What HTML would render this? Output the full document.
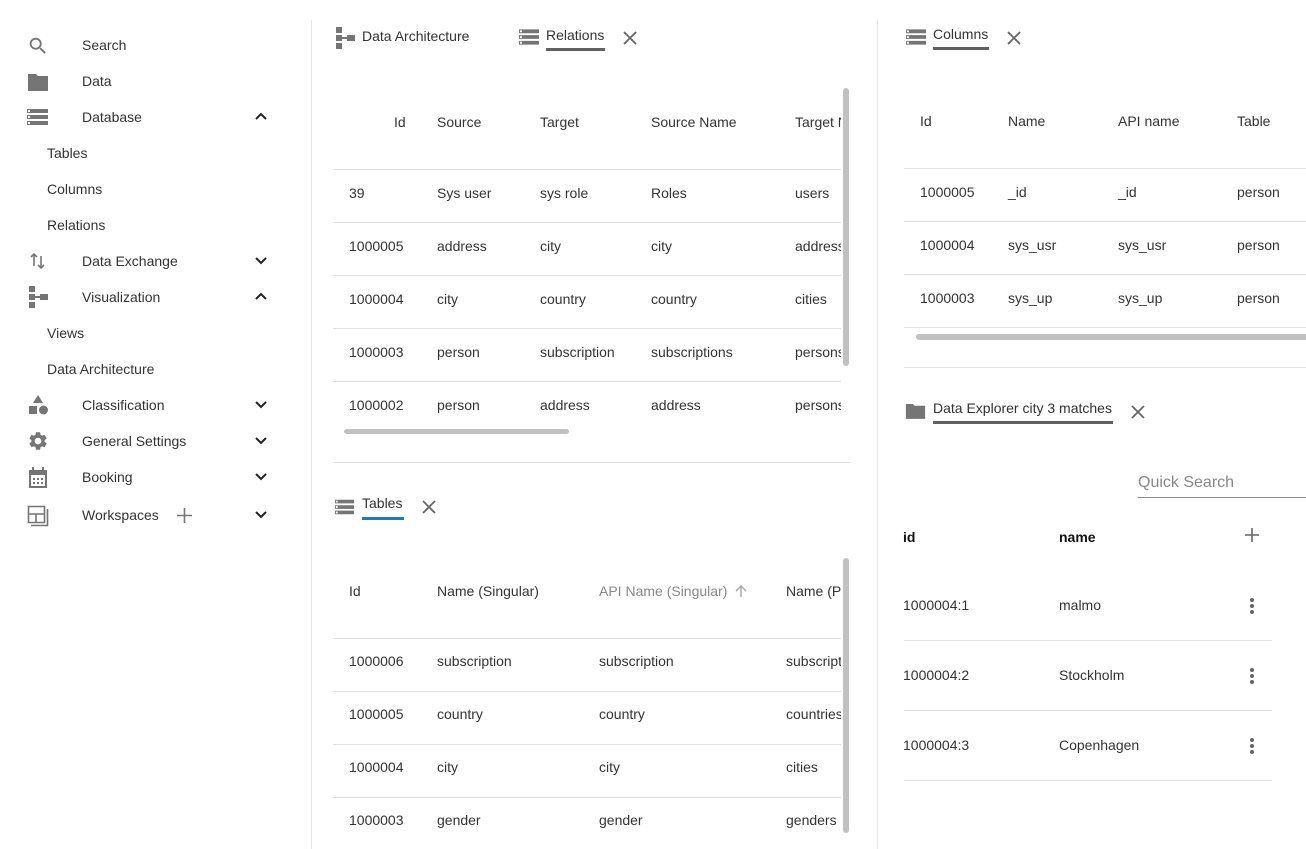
<!DOCTYPE html>
<html><head><meta charset="utf-8"><style>
*{margin:0;padding:0;box-sizing:border-box}
body{width:1306px;height:849px;overflow:hidden;background:#fff;font-family:"Liberation Sans",Arial,sans-serif;font-size:14px;color:#333;position:relative}
.t{position:absolute;line-height:16px;white-space:nowrap}
.l{position:absolute;height:1px;background:#e0e0e0}
.ic{position:absolute}
.clip{position:absolute;overflow:hidden}
.g{color:#888}
</style></head><body>
<!-- vertical dividers -->
<div style="position:absolute;left:311px;top:20px;width:1px;height:829px;background:#e6e6e6"></div>
<div style="position:absolute;left:877px;top:20px;width:1px;height:829px;background:#e6e6e6"></div>

<!-- Sidebar -->
<svg class="ic" style="left:27px;top:35px" width="22" height="22" viewBox="0 0 24 24"><path fill="#757575" d="M15.5 14h-.79l-.28-.27A6.47 6.47 0 0 0 16 9.5 6.5 6.5 0 1 0 9.5 16c1.61 0 3.09-.59 4.23-1.57l.27.28v.79l5 4.99L20.49 19l-4.99-5zm-6 0C7.01 14 5 11.99 5 9.5S7.01 5 9.5 5 14 7.01 14 9.5 11.99 14 9.5 14z"/></svg>
<div class="t" style="left:82px;top:37px">Search</div>
<svg class="ic" style="left:26px;top:71px" width="24" height="22" viewBox="0 0 24 22"><path fill="#757575" d="M2 3h8l2 2h10v15H2z"/></svg>
<div class="t" style="left:82px;top:73px">Data</div>
<svg class="ic" style="left:27px;top:109px" width="21" height="17" viewBox="0 0 21 17"><path fill="#757575" d="M0 0h21v4H0zM0 6h21v4H0zM0 12h21v4H0z"/><path fill="#fff" d="M1 7h2v2H1zM1 13h2v2H1zM1 1h2v2H1z"/></svg>
<div class="t" style="left:82px;top:109px">Database</div>
<svg class="ic" style="left:254px;top:111px" width="14" height="10" viewBox="0 0 14 10"><path d="M2 8l5-5 5 5" fill="none" stroke="#222" stroke-width="2"/></svg>
<div class="t" style="left:47px;top:145px">Tables</div>
<div class="t" style="left:47px;top:181px">Columns</div>
<div class="t" style="left:47px;top:217px">Relations</div>
<svg class="ic" style="left:30px;top:252px" width="16" height="18" viewBox="0 0 16 18"><path d="M4 14V2M1 5l3-3 3 3M11 4v12M8 13l3 3 3-3" fill="none" stroke="#757575" stroke-width="1.6"/></svg>
<div class="t" style="left:82px;top:253px">Data Exchange</div>
<svg class="ic" style="left:254px;top:256px" width="14" height="10" viewBox="0 0 14 10"><path d="M2 2l5 5 5-5" fill="none" stroke="#222" stroke-width="2"/></svg>
<svg class="ic" style="left:29px;top:286px" width="20" height="22" viewBox="0 0 20 22"><path fill="#757575" d="M0 0h6v6H0zM0 8h6v6H0zM0 16h6v6H0zM6 10h6v2H6zM11 8h8v6h-8z"/></svg>
<div class="t" style="left:82px;top:289px">Visualization</div>
<svg class="ic" style="left:254px;top:291px" width="14" height="10" viewBox="0 0 14 10"><path d="M2 8l5-5 5 5" fill="none" stroke="#222" stroke-width="2"/></svg>
<div class="t" style="left:47px;top:325px">Views</div>
<div class="t" style="left:47px;top:361px">Data Architecture</div>
<svg class="ic" style="left:28px;top:395px" width="21" height="21" viewBox="0 0 21 21"><path fill="#757575" d="M10 0l5 8H5zM1 11h8v8H1z"/><circle cx="15.5" cy="15" r="4.5" fill="#757575"/></svg>
<div class="t" style="left:82px;top:397px">Classification</div>
<svg class="ic" style="left:254px;top:400px" width="14" height="10" viewBox="0 0 14 10"><path d="M2 2l5 5 5-5" fill="none" stroke="#222" stroke-width="2"/></svg>
<svg class="ic" style="left:27px;top:430px" width="22" height="22" viewBox="0 0 24 24"><path fill="#757575" d="M19.14 12.94c.04-.3.06-.61.06-.94 0-.32-.02-.64-.07-.94l2.03-1.58a.49.49 0 0 0 .12-.61l-1.92-3.32a.488.488 0 0 0-.59-.22l-2.39.96c-.5-.38-1.03-.7-1.62-.94l-.36-2.54a.484.484 0 0 0-.48-.41h-3.84c-.24 0-.43.17-.47.41l-.36 2.54c-.59.24-1.13.57-1.62.94l-2.39-.96c-.22-.08-.47 0-.59.22L2.74 8.87c-.12.21-.08.47.12.61l2.03 1.58c-.05.3-.09.63-.09.94s.02.64.07.94l-2.03 1.58a.49.49 0 0 0-.12.61l1.92 3.32c.12.22.37.29.59.22l2.39-.96c.5.38 1.03.7 1.62.94l.36 2.54c.05.24.24.41.48.41h3.84c.24 0 .44-.17.47-.41l.36-2.54c.59-.24 1.13-.56 1.62-.94l2.39.96c.22.08.47 0 .59-.22l1.92-3.32c.12-.22.07-.47-.12-.61l-2.01-1.58zM12 15.6c-1.98 0-3.6-1.62-3.6-3.6s1.62-3.6 3.6-3.6 3.6 1.62 3.6 3.6-1.62 3.6-3.6 3.6z"/></svg>
<div class="t" style="left:82px;top:433px">General Settings</div>
<svg class="ic" style="left:254px;top:436px" width="14" height="10" viewBox="0 0 14 10"><path d="M2 2l5 5 5-5" fill="none" stroke="#222" stroke-width="2"/></svg>
<svg class="ic" style="left:28px;top:467px" width="20" height="21" viewBox="0 0 20 21"><path fill="#757575" d="M1 3h18v18H1zM4 0h2v4H4zM14 0h2v4h-2z"/><path fill="#fff" d="M3 8h14v11H3z"/><path fill="#757575" d="M5 11h2v2H5zM9 11h2v2H9zM13 11h2v2h-2zM5 15h2v2H5zM9 15h2v2H9zM13 15h2v2h-2z"/></svg>
<div class="t" style="left:82px;top:469px">Booking</div>
<svg class="ic" style="left:254px;top:472px" width="14" height="10" viewBox="0 0 14 10"><path d="M2 2l5 5 5-5" fill="none" stroke="#222" stroke-width="2"/></svg>
<svg class="ic" style="left:27px;top:505px" width="22" height="22" viewBox="0 0 22 22"><path d="M1.5 1.5h16v16h-16zM1.5 9h16M9 9v8.5M4 20.5h16.5V4" fill="none" stroke="#757575" stroke-width="1.6"/></svg>
<div class="t" style="left:82px;top:507px">Workspaces</div>
<svg class="ic" style="left:177px;top:508px" width="15" height="15" viewBox="0 0 15 15"><path d="M7.5 0v15M0 7.5h15" stroke="#757575" stroke-width="1.6"/></svg>
<svg class="ic" style="left:254px;top:510px" width="14" height="10" viewBox="0 0 14 10"><path d="M2 2l5 5 5-5" fill="none" stroke="#222" stroke-width="2"/></svg>

<!-- Relations panel -->
<svg class="ic" style="left:336px;top:27px" width="20" height="22" viewBox="0 0 20 22"><path fill="#757575" d="M0 0h6v6H0zM0 8h6v6H0zM0 16h6v6H0zM6 10h6v2H6zM11 8h8v6h-8z"/></svg>
<div class="t" style="left:362px;top:28px">Data Architecture</div>
<svg class="ic" style="left:519px;top:29px" width="20" height="17" viewBox="0 0 21 17"><path fill="#757575" d="M0 0h21v4H0zM0 6h21v4H0zM0 12h21v4H0z"/><path fill="#fff" d="M1 7h2v2H1zM1 13h2v2H1zM1 1h2v2H1z"/></svg>
<div class="t" style="left:546px;top:27px">Relations</div>
<div style="position:absolute;left:546px;top:48px;width:59px;height:3px;background:#616161"></div>
<svg class="ic" style="left:622px;top:30px" width="16" height="16" viewBox="0 0 16 16"><path d="M2 2l12 12M14 2L2 14" stroke="#666" stroke-width="1.8"/></svg>
<div class="clip" style="left:333px;top:60px;width:508px;height:400px">
<div class="t" style="left:61px;top:54px">Id</div>
<div class="t" style="left:104px;top:54px">Source</div>
<div class="t" style="left:207px;top:54px">Target</div>
<div class="t" style="left:318px;top:54px">Source Name</div>
<div class="t" style="left:462px;top:54px">Target Name</div>
<div class="l" style="left:0;top:109px;width:508px"></div>
<div class="l" style="left:0;top:162px;width:508px"></div>
<div class="l" style="left:0;top:215px;width:508px"></div>
<div class="l" style="left:0;top:268px;width:508px"></div>
<div class="l" style="left:0;top:321px;width:508px"></div>
<div class="t" style="left:16px;top:125px">39</div><div class="t" style="left:104px;top:125px">Sys user</div><div class="t" style="left:207px;top:125px">sys role</div><div class="t" style="left:318px;top:125px">Roles</div><div class="t" style="left:462px;top:125px">users</div>
<div class="t" style="left:16px;top:178px">1000005</div><div class="t" style="left:104px;top:178px">address</div><div class="t" style="left:207px;top:178px">city</div><div class="t" style="left:318px;top:178px">city</div><div class="t" style="left:462px;top:178px">addresses</div>
<div class="t" style="left:16px;top:231px">1000004</div><div class="t" style="left:104px;top:231px">city</div><div class="t" style="left:207px;top:231px">country</div><div class="t" style="left:318px;top:231px">country</div><div class="t" style="left:462px;top:231px">cities</div>
<div class="t" style="left:16px;top:284px">1000003</div><div class="t" style="left:104px;top:284px">person</div><div class="t" style="left:207px;top:284px">subscription</div><div class="t" style="left:318px;top:284px">subscriptions</div><div class="t" style="left:462px;top:284px">persons</div>
<div class="t" style="left:16px;top:337px">1000002</div><div class="t" style="left:104px;top:337px">person</div><div class="t" style="left:207px;top:337px">address</div><div class="t" style="left:318px;top:337px">address</div><div class="t" style="left:462px;top:337px">persons</div>
</div>
<div style="position:absolute;left:843px;top:88px;width:6px;height:278px;background:#c1c1c1;border-radius:3px"></div>
<div style="position:absolute;left:344px;top:429px;width:225px;height:5px;background:#c1c1c1;border-radius:3px"></div>
<div class="l" style="left:333px;top:462px;width:518px"></div>

<!-- Tables panel -->
<svg class="ic" style="left:335px;top:499px" width="19" height="17" viewBox="0 0 21 17"><path fill="#757575" d="M0 0h21v4H0zM0 6h21v4H0zM0 12h21v4H0z"/><path fill="#fff" d="M1 7h2v2H1zM1 13h2v2H1zM1 1h2v2H1z"/></svg>
<div class="t" style="left:362px;top:495px">Tables</div>
<div style="position:absolute;left:362px;top:517px;width:42px;height:3px;background:#1e7ac8"></div>
<svg class="ic" style="left:421px;top:499px" width="16" height="16" viewBox="0 0 16 16"><path d="M2 2l12 12M14 2L2 14" stroke="#666" stroke-width="1.8"/></svg>
<div class="clip" style="left:333px;top:540px;width:508px;height:309px">
<div class="t" style="left:16px;top:43px">Id</div>
<div class="t" style="left:104px;top:43px">Name (Singular)</div>
<div class="t g" style="left:266px;top:43px">API Name (Singular)</div>
<svg class="ic" style="left:401px;top:44px" width="14" height="14" viewBox="0 0 14 14"><path d="M7 13V2M2 7l5-5 5 5" fill="none" stroke="#aaa" stroke-width="1.5"/></svg>
<div class="t" style="left:453px;top:43px">Name (Plural)</div>
<div class="l" style="left:0;top:98px;width:508px"></div>
<div class="l" style="left:0;top:151px;width:508px"></div>
<div class="l" style="left:0;top:204px;width:508px"></div>
<div class="l" style="left:0;top:257px;width:508px"></div>
<div class="t" style="left:16px;top:113px">1000006</div><div class="t" style="left:104px;top:113px">subscription</div><div class="t" style="left:266px;top:113px">subscription</div><div class="t" style="left:453px;top:113px">subscriptions</div>
<div class="t" style="left:16px;top:166px">1000005</div><div class="t" style="left:104px;top:166px">country</div><div class="t" style="left:266px;top:166px">country</div><div class="t" style="left:453px;top:166px">countries</div>
<div class="t" style="left:16px;top:219px">1000004</div><div class="t" style="left:104px;top:219px">city</div><div class="t" style="left:266px;top:219px">city</div><div class="t" style="left:453px;top:219px">cities</div>
<div class="t" style="left:16px;top:272px">1000003</div><div class="t" style="left:104px;top:272px">gender</div><div class="t" style="left:266px;top:272px">gender</div><div class="t" style="left:453px;top:272px">genders</div>
</div>
<div style="position:absolute;left:843px;top:558px;width:6px;height:275px;background:#c1c1c1;border-radius:3px"></div>

<!-- Columns panel -->
<svg class="ic" style="left:906px;top:29px" width="20" height="17" viewBox="0 0 21 17"><path fill="#757575" d="M0 0h21v4H0zM0 6h21v4H0zM0 12h21v4H0z"/><path fill="#fff" d="M1 7h2v2H1zM1 13h2v2H1zM1 1h2v2H1z"/></svg>
<div class="t" style="left:933px;top:26px">Columns</div>
<div style="position:absolute;left:933px;top:47px;width:56px;height:3px;background:#616161"></div>
<svg class="ic" style="left:1006px;top:30px" width="16" height="16" viewBox="0 0 16 16"><path d="M2 2l12 12M14 2L2 14" stroke="#666" stroke-width="1.8"/></svg>
<div class="t" style="left:920px;top:113px">Id</div>
<div class="t" style="left:1008px;top:113px">Name</div>
<div class="t" style="left:1118px;top:113px">API name</div>
<div class="t" style="left:1237px;top:113px">Table</div>
<div class="l" style="left:904px;top:168px;width:402px"></div>
<div class="l" style="left:904px;top:221px;width:402px"></div>
<div class="l" style="left:904px;top:274px;width:402px"></div>
<div class="l" style="left:904px;top:327px;width:402px"></div>
<div class="t" style="left:920px;top:184px">1000005</div><div class="t" style="left:1008px;top:184px">_id</div><div class="t" style="left:1118px;top:184px">_id</div><div class="t" style="left:1237px;top:184px">person</div>
<div class="t" style="left:920px;top:237px">1000004</div><div class="t" style="left:1008px;top:237px">sys_usr</div><div class="t" style="left:1118px;top:237px">sys_usr</div><div class="t" style="left:1237px;top:237px">person</div>
<div class="t" style="left:920px;top:290px">1000003</div><div class="t" style="left:1008px;top:290px">sys_up</div><div class="t" style="left:1118px;top:290px">sys_up</div><div class="t" style="left:1237px;top:290px">person</div>
<div style="position:absolute;left:916px;top:334px;width:400px;height:6px;background:#c1c1c1;border-radius:3px"></div>
<div class="l" style="left:904px;top:367px;width:402px"></div>

<!-- Data Explorer -->
<svg class="ic" style="left:905px;top:402px" width="21" height="18" viewBox="0 0 24 20"><path fill="#757575" d="M1 2h8l2 2h12v15H1z"/></svg>
<div class="t" style="left:933px;top:400px">Data Explorer city 3 matches</div>
<div style="position:absolute;left:933px;top:421px;width:180px;height:3px;background:#616161"></div>
<svg class="ic" style="left:1130px;top:404px" width="16" height="16" viewBox="0 0 16 16"><path d="M2 2l12 12M14 2L2 14" stroke="#666" stroke-width="1.8"/></svg>
<div class="t" style="left:1138px;top:474px;font-size:16px;color:#888;line-height:18px">Quick Search</div>
<div style="position:absolute;left:1138px;top:497px;width:168px;height:1px;background:#888"></div>
<div class="t" style="left:903px;top:529px;font-weight:bold;color:#111">id</div>
<div class="t" style="left:1059px;top:529px;font-weight:bold;color:#111">name</div>
<svg class="ic" style="left:1245px;top:528px" width="14" height="14" viewBox="0 0 14 14"><path d="M7 0v14M0 7h14" stroke="#666" stroke-width="1.6"/></svg>
<div class="t" style="left:903px;top:597px">1000004:1</div><div class="t" style="left:1059px;top:597px">malmo</div>
<div class="t" style="left:903px;top:667px">1000004:2</div><div class="t" style="left:1059px;top:667px">Stockholm</div>
<div class="t" style="left:903px;top:737px">1000004:3</div><div class="t" style="left:1059px;top:737px">Copenhagen</div>
<svg class="ic" style="left:1249px;top:597px" width="6" height="18" viewBox="0 0 6 18"><circle cx="3" cy="3" r="2" fill="#666"/><circle cx="3" cy="9" r="2" fill="#666"/><circle cx="3" cy="15" r="2" fill="#666"/></svg>
<svg class="ic" style="left:1249px;top:667px" width="6" height="18" viewBox="0 0 6 18"><circle cx="3" cy="3" r="2" fill="#666"/><circle cx="3" cy="9" r="2" fill="#666"/><circle cx="3" cy="15" r="2" fill="#666"/></svg>
<svg class="ic" style="left:1249px;top:737px" width="6" height="18" viewBox="0 0 6 18"><circle cx="3" cy="3" r="2" fill="#666"/><circle cx="3" cy="9" r="2" fill="#666"/><circle cx="3" cy="15" r="2" fill="#666"/></svg>
<div class="l" style="left:904px;top:640px;width:368px"></div>
<div class="l" style="left:904px;top:710px;width:368px"></div>
<div class="l" style="left:904px;top:780px;width:368px"></div>
</body></html>
